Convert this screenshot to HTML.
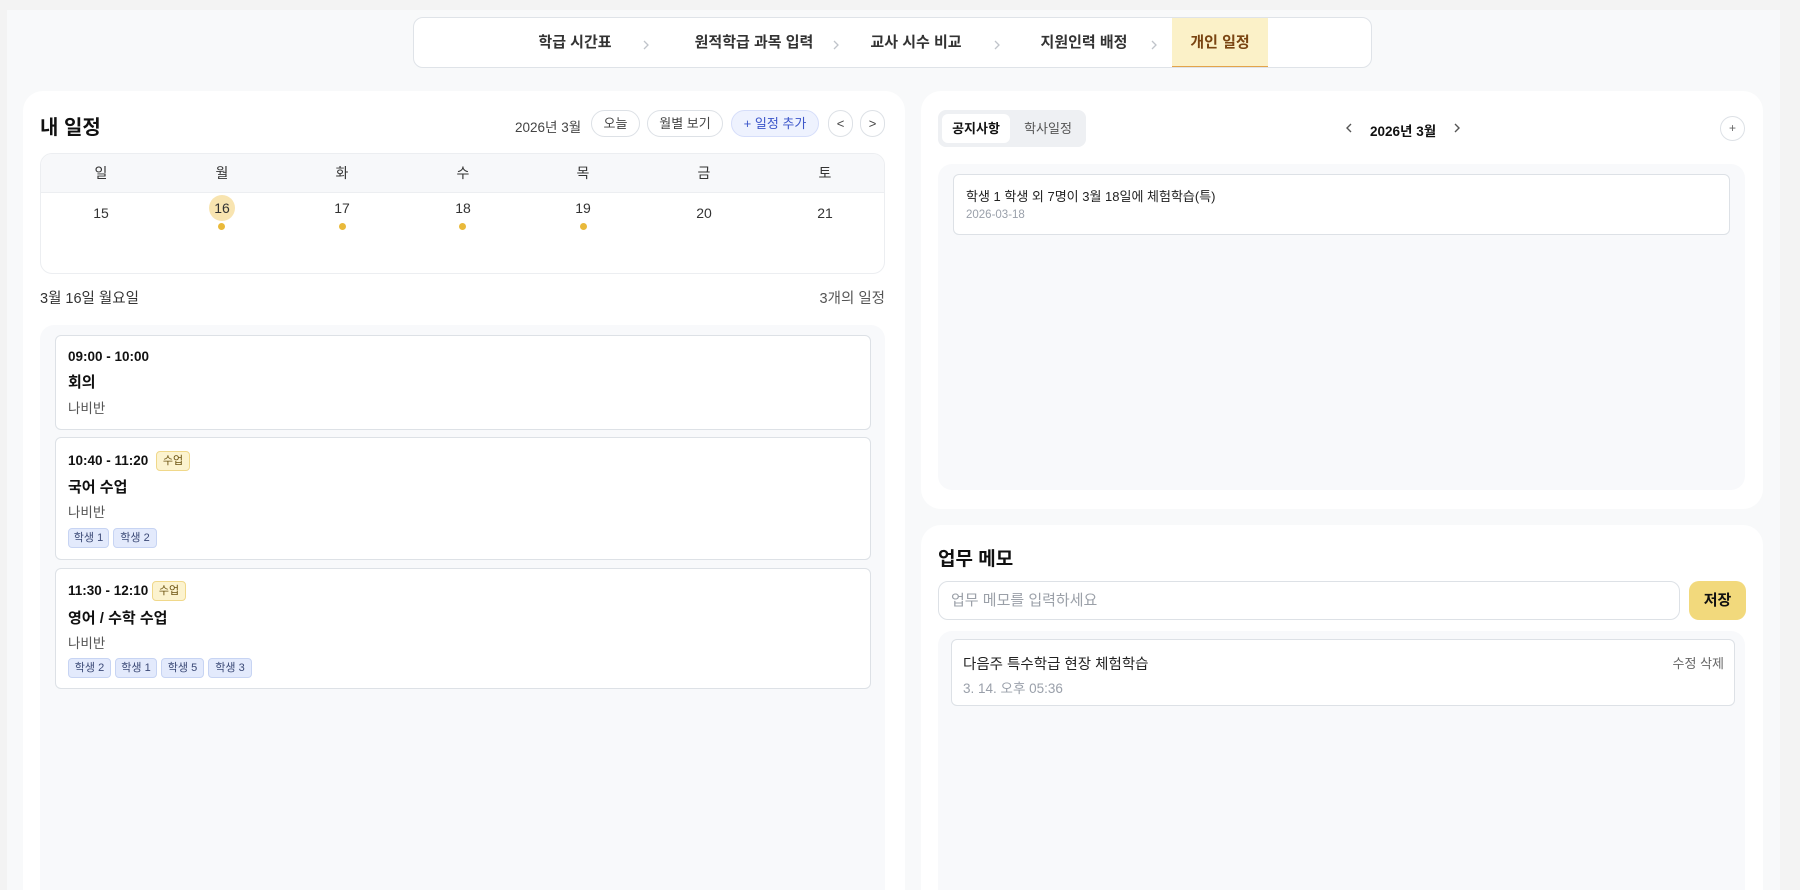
<!DOCTYPE html>
<html><head><meta charset="utf-8"><style>
*{box-sizing:border-box;margin:0;padding:0}
html{width:1800px;height:890px;overflow:hidden}
body{width:1800px;height:890px;overflow:hidden;background:#f3f3f3;font-family:"Liberation Sans","Noto Sans CJK KR",sans-serif;color:#111;position:relative}
.a{position:absolute}
.wrap{left:7px;top:10px;width:1773px;height:880px;background:#f8f9fa}
.nav{left:413px;top:17px;width:959px;height:51px;background:#fff;border:1px solid #dfe3e8;border-radius:10px;overflow:hidden}
.ni{position:absolute;top:0;height:51px;line-height:50px;font-size:15px;font-weight:600;color:#333;transform:translateX(-50%);white-space:nowrap}
.ch{position:absolute;top:20px}
.card{background:#fff;border-radius:20px}
.btn{position:absolute;top:110px;height:27px;border:1px solid #dde1e6;border-radius:14px;background:#fff;font-size:13px;color:#444;text-align:center;line-height:25px}
.dl{position:absolute;font-size:14px;color:#333;transform:translateX(-50%)}
.dot{position:absolute;width:7px;height:7px;border-radius:50%;background:#e9b93a;top:223px}
.ev{position:absolute;left:55px;width:816px;background:#fff;border:1px solid #dde1e6;border-radius:6px}
.t{position:absolute;left:12px;font-size:13.5px;font-weight:700;color:#111}
.ti{position:absolute;left:12px;font-size:15px;font-weight:700}
.sub{position:absolute;left:12px;font-size:13.5px;color:#555}
.bd{position:absolute;height:20px;border:1px solid #f0d88a;background:#fcf3cf;border-radius:4px;font-size:11px;color:#6b5210;line-height:18px;text-align:center}
.chip{position:absolute;height:20px;border:1px solid #c7d4f3;background:#e3eafc;border-radius:4px;font-size:11px;color:#3a4875;line-height:18px;text-align:center}
</style></head><body>
<div class="a wrap"></div>
<div class="a nav">
 <div class="ni" style="left:161px">학급 시간표</div><svg class="ch" style="left:228px" width="8" height="14" viewBox="0 0 8 14"><path d="M2 3l4 4-4 4" fill="none" stroke="#c0c4ca" stroke-width="1.3"/></svg>
 <div class="ni" style="left:340px">원적학급 과목 입력</div><svg class="ch" style="left:418px" width="8" height="14" viewBox="0 0 8 14"><path d="M2 3l4 4-4 4" fill="none" stroke="#c0c4ca" stroke-width="1.3"/></svg>
 <div class="ni" style="left:502px">교사 시수 비교</div><svg class="ch" style="left:579px" width="8" height="14" viewBox="0 0 8 14"><path d="M2 3l4 4-4 4" fill="none" stroke="#c0c4ca" stroke-width="1.3"/></svg>
 <div class="ni" style="left:670px">지원인력 배정</div><svg class="ch" style="left:736px" width="8" height="14" viewBox="0 0 8 14"><path d="M2 3l4 4-4 4" fill="none" stroke="#c0c4ca" stroke-width="1.3"/></svg>
 <div style="position:absolute;left:758px;top:0;width:96px;height:50px;background:#fbf1c8;border-bottom:2px solid #e3a44a;text-align:center;line-height:49px;font-size:15px;font-weight:600;color:#7a4512">개인 일정</div>
</div>

<div class="a card" style="left:23px;top:91px;width:882px;height:799px;border-radius:20px 20px 0 0"></div>
<div class="a" style="left:40px;top:111px;font-size:20px;font-weight:700">내 일정</div>
<div class="a" style="left:515px;top:116px;font-size:13.5px;color:#444">2026년 3월</div>
<div class="btn" style="left:591px;width:49px">오늘</div>
<div class="btn" style="left:647px;width:76px">월별 보기</div>
<div class="btn" style="left:731px;width:88px;background:#eef2fe;border-color:#d6defa;color:#3b55c9">+ 일정 추가</div>
<div class="btn" style="left:828px;width:25px">&lt;</div>
<div class="btn" style="left:860px;width:25px">&gt;</div>

<div class="a" style="left:40px;top:153px;width:845px;height:121px;border:1px solid #eceef1;border-radius:12px;overflow:hidden">
 <div style="height:39px;background:#f7f8fa;border-bottom:1px solid #eceef1"></div>
</div>
<div class="dl" style="left:101px;top:163px">일</div>
<div class="dl" style="left:222px;top:163px">월</div>
<div class="dl" style="left:342px;top:163px">화</div>
<div class="dl" style="left:463px;top:163px">수</div>
<div class="dl" style="left:583px;top:163px">목</div>
<div class="dl" style="left:704px;top:163px">금</div>
<div class="dl" style="left:825px;top:163px">토</div>
<div class="a" style="left:209px;top:195px;width:26px;height:26px;border-radius:50%;background:#f8e4b0"></div>
<div class="dl" style="left:101px;top:205px">15</div>
<div class="dl" style="left:222px;top:200px">16</div>
<div class="dl" style="left:342px;top:200px">17</div>
<div class="dl" style="left:463px;top:200px">18</div>
<div class="dl" style="left:583px;top:200px">19</div>
<div class="dl" style="left:704px;top:205px">20</div>
<div class="dl" style="left:825px;top:205px">21</div>
<div class="dot" style="left:218px"></div><div class="dot" style="left:339px"></div><div class="dot" style="left:459px"></div><div class="dot" style="left:580px"></div>

<div class="a" style="left:40px;top:287px;font-size:14.5px;color:#333">3월 16일 월요일</div>
<div class="a" style="left:785px;top:287px;width:100px;text-align:right;font-size:14.5px;color:#555">3개의 일정</div>

<div class="a" style="left:40px;top:325px;width:845px;height:565px;background:#f8f9fb;border-radius:14px 14px 0 0"></div>
<div class="ev" style="top:335px;height:95px">
 <div class="t" style="top:13px">09:00 - 10:00</div>
 <div class="ti" style="top:35px">회의</div>
 <div class="sub" style="top:61px">나비반</div>
</div>
<div class="ev" style="top:437px;height:123px">
 <div class="t" style="top:15px">10:40 - 11:20</div>
 <div class="bd" style="left:100px;top:13px;width:34px">수업</div>
 <div class="ti" style="top:38px">국어 수업</div>
 <div class="sub" style="top:63px">나비반</div>
 <div class="chip" style="left:12px;top:90px;width:41px">학생 1</div>
 <div class="chip" style="left:57px;top:90px;width:44px">학생 2</div>
</div>
<div class="ev" style="top:568px;height:121px">
 <div class="t" style="top:14px">11:30 - 12:10</div>
 <div class="bd" style="left:96px;top:12px;width:34px">수업</div>
 <div class="ti" style="top:38px">영어 / 수학 수업</div>
 <div class="sub" style="top:63px">나비반</div>
 <div class="chip" style="left:12px;top:89px;width:43px">학생 2</div>
 <div class="chip" style="left:59px;top:89px;width:42px">학생 1</div>
 <div class="chip" style="left:105px;top:89px;width:43px">학생 5</div>
 <div class="chip" style="left:152px;top:89px;width:44px">학생 3</div>
</div>

<div class="a card" style="left:921px;top:91px;width:842px;height:418px"></div>
<div class="a" style="left:938px;top:110px;width:148px;height:37px;background:#eef0f3;border-radius:8px">
 <div style="position:absolute;left:4px;top:4px;width:68px;height:29px;background:#fff;border-radius:6px;text-align:center;line-height:29px;font-size:13px;font-weight:700">공지사항</div>
 <div style="position:absolute;left:76px;top:4px;width:68px;height:29px;text-align:center;line-height:29px;font-size:13px;color:#555">학사일정</div>
</div>
<svg class="a" style="left:1345px;top:121px" width="8" height="14" viewBox="0 0 8 14"><path d="M6 3L2 7l4 4" fill="none" stroke="#555" stroke-width="1.4"/></svg>
<div class="a" style="left:1370px;top:120px;font-size:13.5px;font-weight:700">2026년 3월</div>
<svg class="a" style="left:1453px;top:121px" width="8" height="14" viewBox="0 0 8 14"><path d="M2 3l4 4-4 4" fill="none" stroke="#555" stroke-width="1.4"/></svg>
<div class="a" style="left:1720px;top:116px;width:25px;height:25px;border:1px solid #dde1e6;border-radius:50%;text-align:center;line-height:22px;font-size:12px;color:#666">+</div>
<div class="a" style="left:938px;top:164px;width:807px;height:326px;background:#f8f9fb;border-radius:14px"></div>
<div class="a" style="left:953px;top:174px;width:777px;height:61px;background:#fff;border:1px solid #dde1e6;border-radius:6px">
 <div style="position:absolute;left:12px;top:11px;font-size:13px;color:#222">학생 1 학생 외 7명이 3월 18일에 체험학습(특)</div>
 <div style="position:absolute;left:12px;top:34px;font-size:11.5px;color:#9aa0aa">2026-03-18</div>
</div>

<div class="a card" style="left:921px;top:525px;width:842px;height:365px;border-radius:20px 20px 0 0"></div>
<div class="a" style="left:938px;top:544px;font-size:19px;font-weight:700">업무 메모</div>
<div class="a" style="left:938px;top:581px;width:742px;height:39px;border:1px solid #dde1e6;border-radius:10px;background:#fff;padding-left:12px;line-height:37px;font-size:15px;color:#9ba0a8">업무 메모를 입력하세요</div>
<div class="a" style="left:1689px;top:581px;width:57px;height:39px;border-radius:10px;background:#f2d97c;text-align:center;line-height:39px;font-size:15px;font-weight:700">저장</div>
<div class="a" style="left:938px;top:631px;width:807px;height:259px;background:#f8f9fb;border-radius:14px 14px 0 0"></div>
<div class="a" style="left:951px;top:639px;width:784px;height:67px;background:#fff;border:1px solid #dde1e6;border-radius:6px">
 <div style="position:absolute;left:11px;top:13px;font-size:14.5px;color:#222">다음주 특수학급 현장 체험학습</div>
 <div style="position:absolute;right:10px;top:13px;font-size:13px;color:#666">수정 삭제</div>
 <div style="position:absolute;left:11px;top:37px;font-size:13.5px;color:#9aa0aa">3. 14. 오후 05:36</div>
</div>
</body></html>
